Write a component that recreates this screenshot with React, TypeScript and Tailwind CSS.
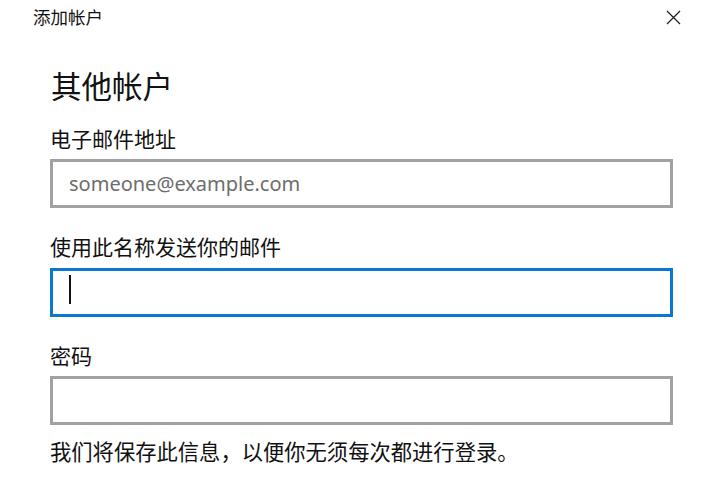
const font = { fontFamily: '"Noto Sans", "Noto Sans CJK SC", sans-serif' };

const CloseIcon = () => (
  <svg width="15" height="15" viewBox="0 0 15 15" fill="none" stroke="#222" strokeWidth="1.3">
    <path d="M1 1 L14 14 M14 1 L1 14" />
  </svg>
);

const Field = ({ label, placeholder, focused, className }: { label: string; placeholder?: string; focused?: boolean; className: string }) => (
  <div className={className}>
    <div className="text-[21px] leading-[28px] text-[#111]">{label}</div>
    <div
      className={
        focused
          ? "mt-[7px] w-[623px] h-[49px] border-[3px] border-[#0a78d0] bg-white flex items-center pl-[16px]"
          : "mt-[6px] w-[623px] h-[49px] border-[3px] border-[#a2a2a2] bg-white flex items-center pl-[16px]"
      }
    >
      {placeholder && <span className="text-[20px] text-[#6d6d6d]">{placeholder}</span>}
      {focused && <span className="w-[2px] h-[29px] bg-[#111] -mt-[6px]" />}
    </div>
  </div>
);

export default function App() {
  return (
    <div className="w-[702px] h-[485px] overflow-hidden bg-white text-[#111]" style={font}>
      {/* title bar */}
      <div className="h-[34px] flex items-center justify-between pl-[33px] pr-[21px]">
        <span className="text-[17.5px] leading-[34px]">添加帐户</span>
        <CloseIcon />
      </div>

      <div className="pl-[50px]">
        <h1 className="mt-[34px] pl-[1px] text-[30.5px] leading-[36px] font-normal">其他帐户</h1>
        <Field className="mt-[21px]" label="电子邮件地址" placeholder="someone@example.com" />
        <Field className="mt-[25px]" label="使用此名称发送你的邮件" focused />
        <Field className="mt-[25px]" label="密码" />
        <p className="mt-[13px] text-[21.3px] leading-[28px]">我们将保存此信息，以便你无须每次都进行登录。</p>
      </div>
    </div>
  );
}
